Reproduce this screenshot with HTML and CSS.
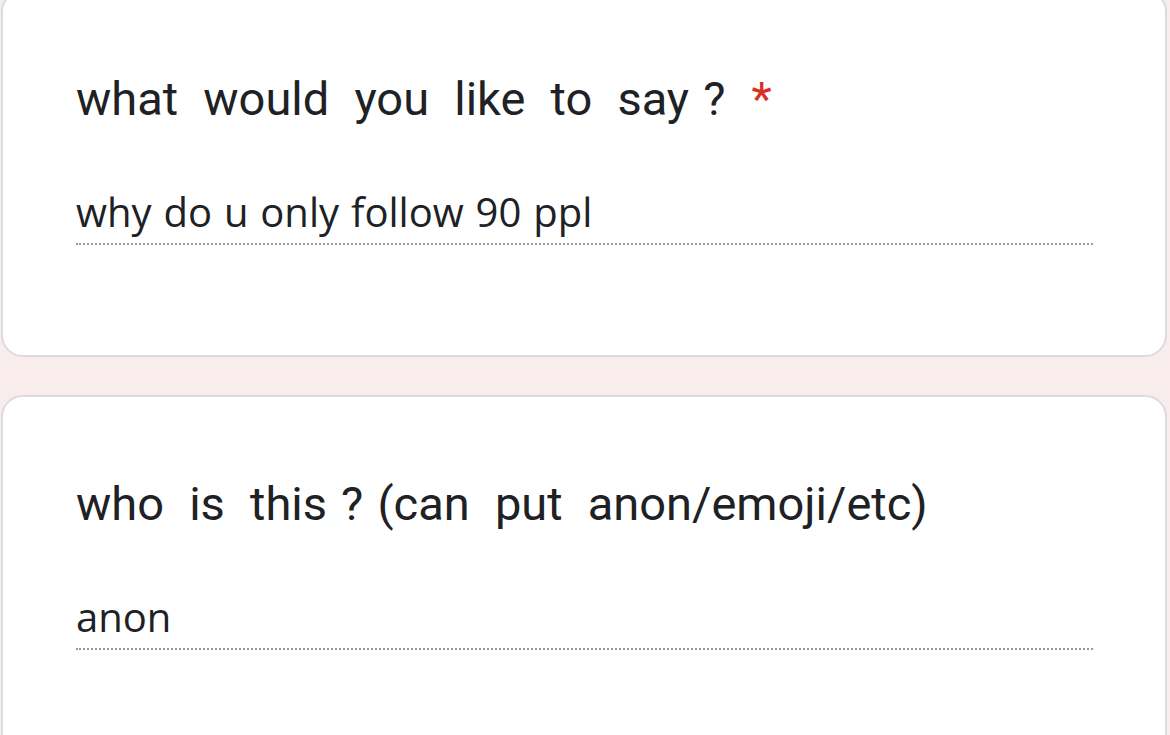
FILE: index.html
```html
<!DOCTYPE html>
<html lang="en">
<head>
  <meta charset="UTF-8" />
  <meta name="viewport" content="width=device-width, initial-scale=1.0" />
  <title>Form response</title>
  <link rel="stylesheet" href="styles.css">
</head>
<body>

  <div class="form">
    <div class="card">
      <div class="question">what would you like to <span class="tight">say ?</span><span class="required">*</span></div>
      <div class="answer">why do u only follow 90 ppl</div>
    </div>

    <div class="card">
      <div class="question">who is <span class="tight">this ? (can</span> put anon/emoji/etc)</div>
      <div class="answer">anon</div>
    </div>
  </div>

</body>
</html>
```

FILE: styles.css
```css
body {
  margin: 0;
  background: #f8ecec;
  font-family: Roboto, 'Noto Sans', sans-serif;
  color: #202124;
  overflow: hidden;
}

.form {
  display: flex;
  flex-direction: column;
  gap: 38px;
  margin-top: -10px;
  padding: 0 3px 0 1px;
}

.card {
  background: #fff;
  border: 2px solid #dadce0;
  border-radius: 22px;
  padding: 79px 72px 110px 73px;
}

.question {
  font-size: 47px;
  line-height: 56px;
  word-spacing: 13.5px;
}

.tight {
  word-spacing: 2.5px;
}

.required {
  color: #d93025;
  margin-left: 26px;
}

.answer {
  margin-top: 61px;
  font-family: 'Open Sans', 'Noto Sans', sans-serif;
  font-size: 40px;
  line-height: 48px;
  word-spacing: 1.5px;
  padding-bottom: 7px;
  border-bottom: 2px dotted #999;
}
```
